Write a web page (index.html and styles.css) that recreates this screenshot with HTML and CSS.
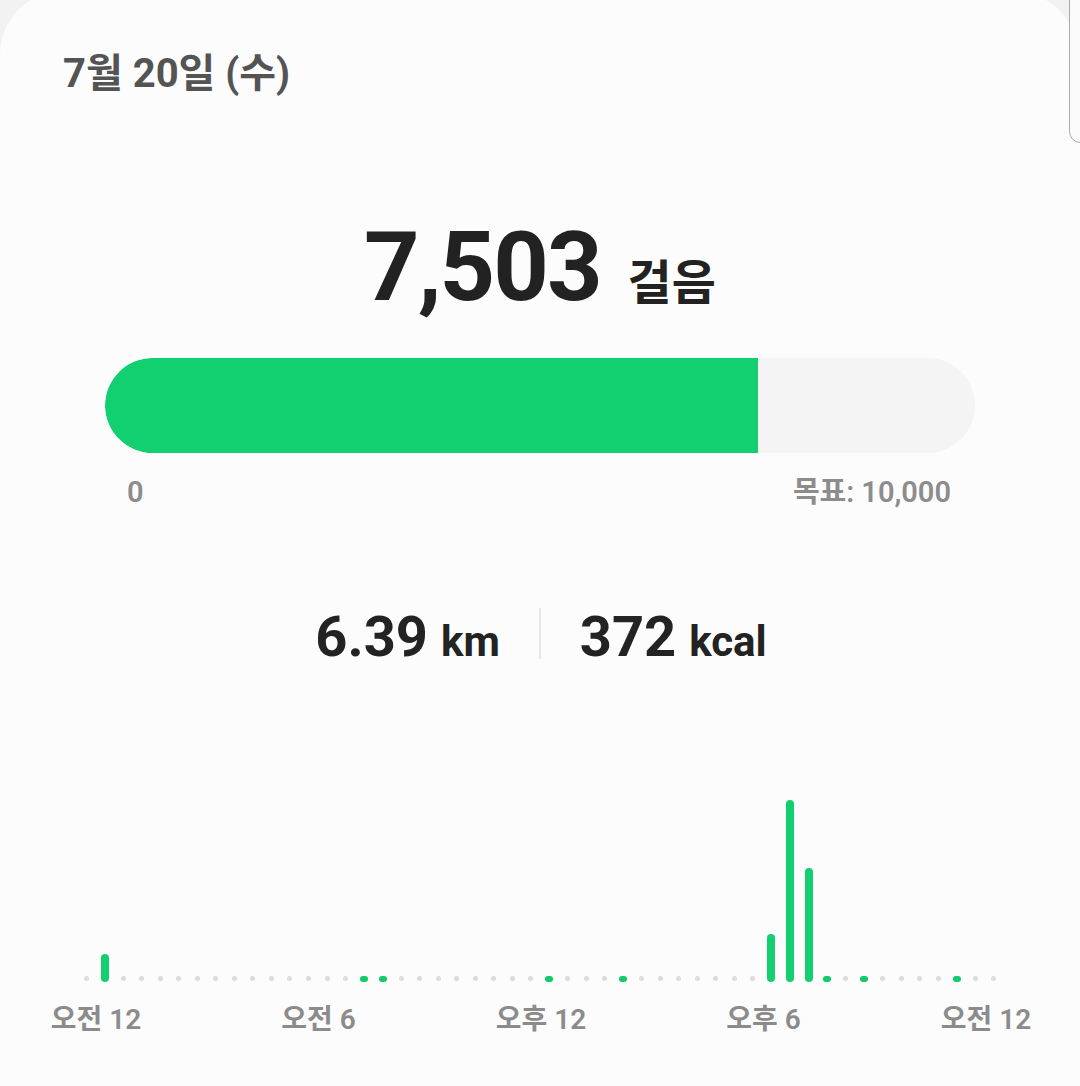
FILE: index.html
```html
<!DOCTYPE html>
<html lang="ko">
<head>
<meta charset="utf-8">
<title>걸음</title>
<link rel="stylesheet" href="styles.css">
</head>
<body>
<div class="thumb"></div>
<main class="card">
  <h1 class="date">7월 20일 (수)</h1>
  <div class="total"><span class="steps">7,503</span><span class="steps-unit">걸음</span></div>
  <div class="progress"><div class="progress-fill" style="width:75.03%"></div></div>
  <div class="progress-labels"><span>0</span><span>목표: 10,000</span></div>
  <div class="stats">
    <div class="stat"><span class="stat-value">6.39</span><span class="stat-unit">km</span></div>
    <div class="divider"></div>
    <div class="stat"><span class="stat-value">372</span><span class="stat-unit">kcal</span></div>
  </div>
  <div class="chart">
    <div class="cell"><i class="dot"></i></div>
    <div class="cell"><i class="bar" style="height:28px"></i></div>
    <div class="cell"><i class="dot"></i></div>
    <div class="cell"><i class="dot"></i></div>
    <div class="cell"><i class="dot"></i></div>
    <div class="cell"><i class="dot"></i></div>
    <div class="cell"><i class="dot"></i></div>
    <div class="cell"><i class="dot"></i></div>
    <div class="cell"><i class="dot"></i></div>
    <div class="cell"><i class="dot"></i></div>
    <div class="cell"><i class="dot"></i></div>
    <div class="cell"><i class="dot"></i></div>
    <div class="cell"><i class="dot"></i></div>
    <div class="cell"><i class="dot"></i></div>
    <div class="cell"><i class="dot"></i></div>
    <div class="cell"><i class="gdot"></i></div>
    <div class="cell"><i class="gdot"></i></div>
    <div class="cell"><i class="dot"></i></div>
    <div class="cell"><i class="dot"></i></div>
    <div class="cell"><i class="dot"></i></div>
    <div class="cell"><i class="dot"></i></div>
    <div class="cell"><i class="dot"></i></div>
    <div class="cell"><i class="dot"></i></div>
    <div class="cell"><i class="dot"></i></div>
    <div class="cell"><i class="dot"></i></div>
    <div class="cell"><i class="gdot"></i></div>
    <div class="cell"><i class="dot"></i></div>
    <div class="cell"><i class="dot"></i></div>
    <div class="cell"><i class="dot"></i></div>
    <div class="cell"><i class="gdot"></i></div>
    <div class="cell"><i class="dot"></i></div>
    <div class="cell"><i class="dot"></i></div>
    <div class="cell"><i class="dot"></i></div>
    <div class="cell"><i class="dot"></i></div>
    <div class="cell"><i class="dot"></i></div>
    <div class="cell"><i class="dot"></i></div>
    <div class="cell"><i class="dot"></i></div>
    <div class="cell"><i class="bar" style="height:48px"></i></div>
    <div class="cell"><i class="bar" style="height:182px"></i></div>
    <div class="cell"><i class="bar" style="height:114px"></i></div>
    <div class="cell"><i class="gdot"></i></div>
    <div class="cell"><i class="dot"></i></div>
    <div class="cell"><i class="gdot"></i></div>
    <div class="cell"><i class="dot"></i></div>
    <div class="cell"><i class="dot"></i></div>
    <div class="cell"><i class="dot"></i></div>
    <div class="cell"><i class="dot"></i></div>
    <div class="cell"><i class="gdot"></i></div>
    <div class="cell"><i class="dot"></i></div>
    <div class="cell"><i class="dot"></i></div>
  </div>
  <div class="axis">
    <span>오전 12</span><span>오전 6</span><span>오후 12</span><span>오후 6</span><span>오전 12</span>
  </div>
</main>
</body>
</html>
```

FILE: styles.css
```css
html, body {
  margin: 0;
  padding: 0;
}
body {
  background: #f2f2f2;
  font-family: Roboto, "Noto Sans CJK KR", sans-serif;
  color: #242424;
  overflow: hidden;
  position: relative;
  height: 1086px;
}
.thumb {
  position: absolute;
  top: -20px;
  right: -12px;
  width: 23px;
  height: 163px;
  box-sizing: border-box;
  border: 1.5px solid #a9a9a9;
  border-radius: 13px;
  background: #fbfbfb;
  z-index: 2;
}
.card {
  display: block;
  margin: -10px 0 0 0;
  padding-top: 10px;
  height: 1100px;
  background: #fcfcfc;
  border-radius: 65px 70px 0 0;
}
.date {
  margin: 52px 0 0 63px;
  font-size: 40px;
  line-height: 44px;
  font-weight: 700;
  color: #545454;
}
.total {
  margin-top: 121px;
  text-align: center;
  line-height: 100px;
  height: 100px;
  white-space: nowrap;
}
.steps {
  font-size: 97px;
  font-weight: 700;
  color: #222;
  letter-spacing: -2px;
}
.steps-unit {
  font-size: 48px;
  line-height: 1;
  font-weight: 700;
  color: #222;
  margin-left: 27px;
}
.progress {
  margin: 41px 0 0 105px;
  width: 870px;
  height: 95px;
  border-radius: 48px;
  background: #f4f4f4;
  overflow: hidden;
}
.progress-fill {
  height: 100%;
  background: #12cf6f;
  border-radius: 48px 0 0 48px;
}
.progress-labels {
  margin: 22px 0 0 105px;
  width: 870px;
  box-sizing: border-box;
  padding: 0 24px 0 22px;
  display: flex;
  justify-content: space-between;
  font-size: 29px;
  line-height: 34px;
  font-weight: 600;
  color: #8c8c8c;
}
.stats {
  margin-top: 96px;
  padding-left: 2px;
  display: flex;
  justify-content: center;
  gap: 39px;
  height: 64px;
}
.stat {
  line-height: 64px;
  white-space: nowrap;
  color: #232323;
}
.stat-value {
  font-size: 56px;
  font-weight: 700;
}
.stat-unit {
  font-size: 42px;
  font-weight: 700;
  margin-left: 13px;
}
.divider {
  align-self: flex-start;
  margin-top: 3px;
  width: 2px;
  height: 51px;
  background: #e6e6e6;
}
.chart {
  margin: 123px 0 0 77px;
  width: 926px;
  height: 190px;
  display: grid;
  grid-template-columns: repeat(50, 1fr);
  align-items: end;
}
.cell {
  display: flex;
  justify-content: center;
  align-items: flex-end;
  height: 100%;
}
.dot {
  display: block;
  width: 5px;
  height: 5px;
  border-radius: 50%;
  background: #dcdcdc;
  margin-bottom: 1px;
}
.gdot {
  display: block;
  width: 8px;
  height: 6px;
  border-radius: 4px;
  background: #12c96c;
}
.bar {
  display: block;
  width: 8px;
  border-radius: 4px;
  background: #12cf6f;
}
.axis {
  margin: 21px 0 0 41px;
  width: 1000px;
  display: flex;
  justify-content: space-between;
  font-size: 28px;
  line-height: 34px;
  font-weight: 600;
  color: #8b8b8b;
  white-space: nowrap;
}
.axis span {
  width: 110px;
  text-align: center;
}
```
